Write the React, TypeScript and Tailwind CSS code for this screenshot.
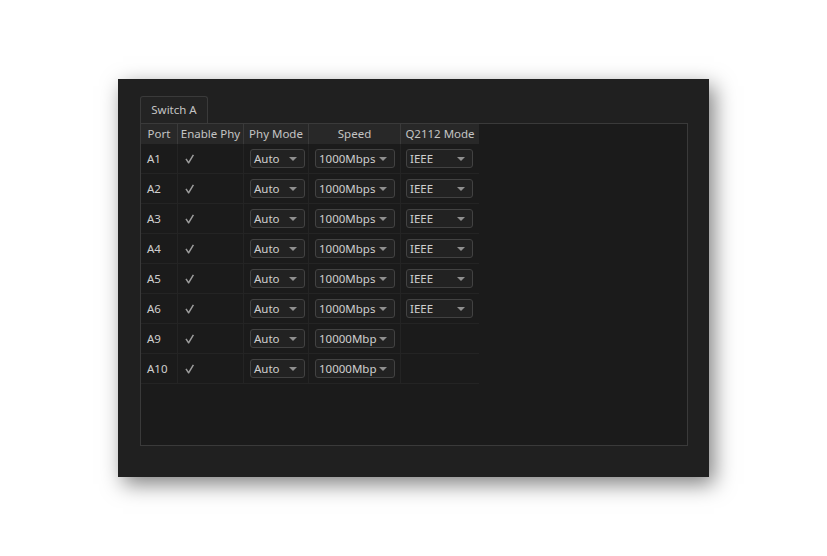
import React from "react";

const rows = [
  { port: "A1", speed: "1000Mbps", q: "IEEE" },
  { port: "A2", speed: "1000Mbps", q: "IEEE" },
  { port: "A3", speed: "1000Mbps", q: "IEEE" },
  { port: "A4", speed: "1000Mbps", q: "IEEE" },
  { port: "A5", speed: "1000Mbps", q: "IEEE" },
  { port: "A6", speed: "1000Mbps", q: "IEEE" },
  { port: "A9", speed: "10000Mbp", q: "" },
  { port: "A10", speed: "10000Mbp", q: "" },
];

function Combo({ text, w }: { text: string; w: string }) {
  return (
    <div
      className={`${w} relative h-[19px] flex items-center rounded-[3px] border border-[#424242] bg-[#222222] pl-[3px] text-[11.5px] text-[#cfcfcf]`}
    >
      <span className="leading-none">{text}</span>
      <svg className="absolute right-[7px] top-[7px]" width="8" height="4" viewBox="0 0 8 4">
        <path d="M0 0 L8 0 L4 4 Z" fill="#8f8f8f" />
      </svg>
    </div>
  );
}

function Check() {
  return (
    <svg width="10" height="10" viewBox="0 0 10 10">
      <path d="M1 4.8 L3.6 8.8 L8.4 0.8" fill="none" stroke="#9c9c9c" strokeWidth="1.5" strokeLinejoin="round" />
    </svg>
  );
}

export default function App() {
  return (
    <div
      className="w-[827px] h-[556px] bg-white pl-[118px] pt-[79px]"
      style={{ fontFamily: '"Noto Sans", "Open Sans", sans-serif' }}
    >
      <div className="w-[591px] h-[398px] bg-[#202020] pl-[22px] pt-[17px] shadow-[5px_7px_20px_rgba(0,0,0,0.5)]">
        <div className="flex flex-col">
          <div className="w-[68px] h-[27px] border border-b-0 border-[#3a3a3a] rounded-t-[3px] bg-[#232323] flex items-center justify-center text-[11.5px] text-[#c4c4c4]">
            Switch A
          </div>
          <div className="w-[548px] h-[323px] border border-[#3a3a3a] bg-[#1b1b1b]">
            <div className="flex h-[20px] w-[338px] bg-[#282828] text-[11.5px] text-[#c4c4c4]">
              <div className="w-[37px] flex items-center justify-center border-r border-[#3a3a3a]">Port</div>
              <div className="w-[66px] flex items-center justify-center border-r border-[#3a3a3a]">Enable Phy</div>
              <div className="w-[65px] flex items-center justify-center border-r border-[#3a3a3a]">Phy Mode</div>
              <div className="w-[92px] flex items-center justify-center border-r border-[#3a3a3a]">Speed</div>
              <div className="w-[78px] flex items-center justify-center">Q2112 Mode</div>
            </div>
            {rows.map((r) => (
              <div key={r.port} className="flex h-[30px] w-[338px] border-b border-[#242424] text-[11.5px] text-[#cfcfcf]">
                <div className="w-[37px] flex items-center pl-[6px] border-r border-[#242424]">{r.port}</div>
                <div className="w-[66px] flex items-center pl-[7px] border-r border-[#242424]">
                  <Check />
                </div>
                <div className="w-[65px] flex items-center pl-[6px] border-r border-[#242424]">
                  <Combo text="Auto" w="w-[55px]" />
                </div>
                <div className="w-[92px] flex items-center pl-[6px] border-r border-[#242424]">
                  <Combo text={r.speed} w="w-[80px]" />
                </div>
                <div className="w-[78px] flex items-center pl-[5px]">
                  {r.q && <Combo text={r.q} w="w-[67px]" />}
                </div>
              </div>
            ))}
          </div>
        </div>
      </div>
    </div>
  );
}
